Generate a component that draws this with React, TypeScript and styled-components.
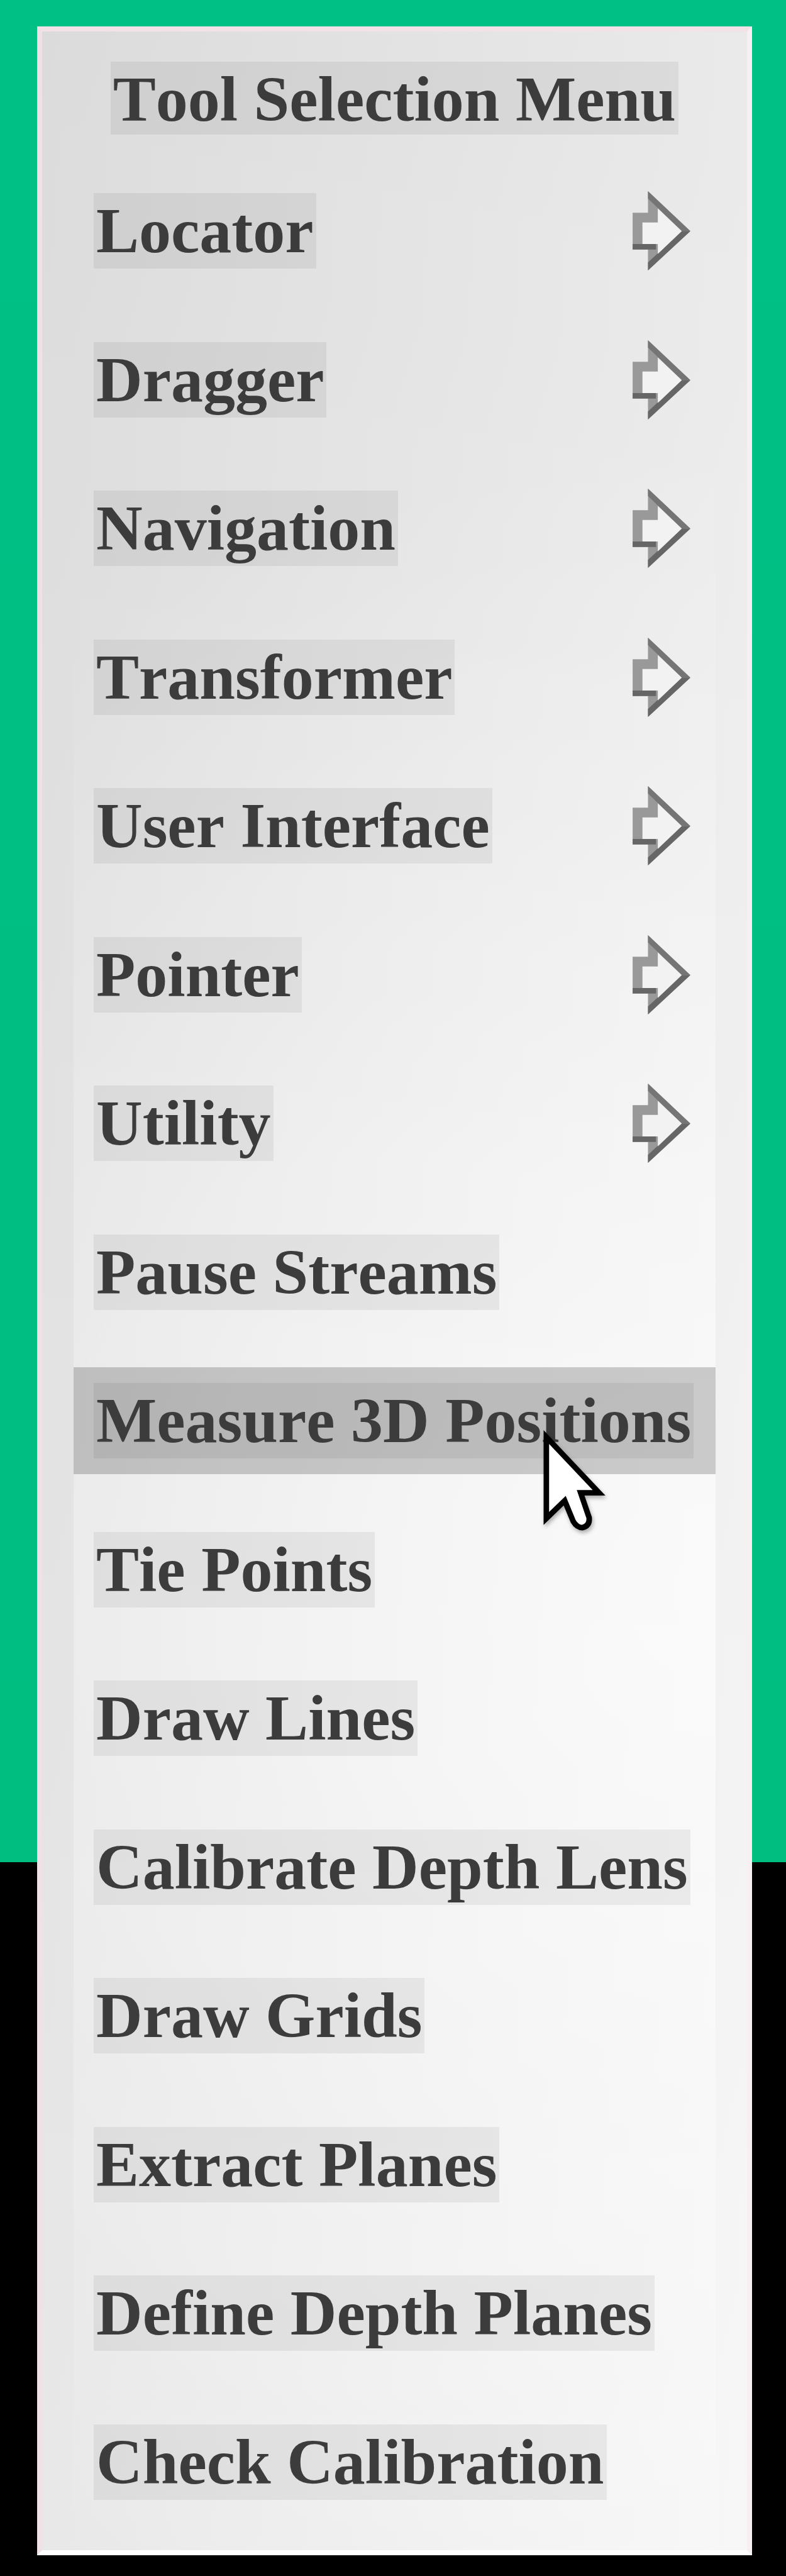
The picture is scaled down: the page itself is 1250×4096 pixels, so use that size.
import React from "react";
import styled, { createGlobalStyle, css } from "styled-components";

const GlobalStyle = createGlobalStyle`
  *, *::before, *::after { box-sizing: border-box; }
  body { margin: 0; background: #000; }
`;

const Desktop = styled.main`
  display: flex;
  min-height: 100vh;
  padding: 42px 56px 33px 59px;
  background: linear-gradient(#00c085 0, #00bd80 72.3%, #000 72.3%);
`;

const Panel = styled.nav`
  display: flex;
  flex: 1;
  flex-direction: column;
  padding: 0 50px 22px 50px;
  border: 8px solid;
  border-color: #f3e3e8 #f8eff2 #fff #efe2e6;
  background:
    radial-gradient(ellipse 180% 46% at 100% 62%, rgba(255, 255, 255, 0.66), rgba(255, 255, 255, 0)) 50% 0 / calc(100% - 100px) 100% no-repeat,
    linear-gradient(rgba(0, 0, 0, 0.045), rgba(0, 0, 0, 0.02) 50%, rgba(0, 0, 0, 0)),
    linear-gradient(93deg, #e5e5e5, #f7f7f7);
  color: #3c3c3c;
  font: bold 102px/120px "Liberation Serif", "Times New Roman", serif;
  font-kerning: none;
  font-variant-ligatures: none;
`;

const Header = styled.header`
  display: flex;
  height: 199px;
  padding-top: 48px;
  justify-content: center;
`;

const Title = styled.h1`
  height: 116px;
  margin: 0;
  padding: 0 4px;
  background: rgba(0, 0, 0, 0.06);
  font: inherit;
  white-space: nowrap;
`;

const Items = styled.ul`
  display: grid;
  flex: 1;
  grid-auto-rows: 1fr;
  margin: 0;
  padding: 0;
  list-style: none;
`;

const Item = styled.li`
  display: flex;
  position: relative;
  align-items: center;
`;

const ItemButton = styled.button<{ $active?: boolean }>`
  display: flex;
  flex: 1;
  align-items: center;
  justify-content: space-between;
  height: 170px;
  padding: 0 40px 0 32px;
  border: 0;
  background: none;
  color: inherit;
  font: inherit;
  font-kerning: inherit;
  font-variant-ligatures: inherit;
  text-align: left;
  white-space: nowrap;
  ${(p) => p.$active && css`background: rgba(0, 0, 0, 0.19); padding-right: 0;`}
`;

const Label = styled.span`
  padding: 0 4px;
  background: rgba(0, 0, 0, 0.06);
`;

const ArrowIcon = styled.svg`
  flex: none;
  width: 92px;
  height: 126px;
`;

const Pointer = styled.svg`
  position: absolute;
  top: 132px;
  left: 747px;
  z-index: 1;
  width: 112px;
  height: 168px;
  overflow: visible;
  filter: drop-shadow(2px 4px 3px rgba(0, 0, 0, 0.3));
  pointer-events: none;
`;

function SubmenuArrow() {
  return (
    <ArrowIcon viewBox="0 0 94 129" aria-hidden="true">
      <path d="M0 35H25V0L94 65L25 129V95H0Z" fill="#999" />
      <path d="M25 0L94 65H80L25 12Z" fill="#757575" />
      <path d="M94 65L25 129V116L80 65ZM0 86H38V95H0Z" fill="#666" />
      <path d="M16 51H41V28L80 65L41 102V86H16Z" fill="#f2f2f2" />
    </ArrowIcon>
  );
}

function MousePointer() {
  return (
    <Pointer viewBox="0 0 115 172" aria-hidden="true">
      <path
        d="M5 12V145L35 116L49 150Q55 160 64 160Q76 157 75 144L61 103H91Z"
        fill="#fff"
        stroke="#000"
        strokeWidth="9"
      />
      <path d="M46 98L61 145" stroke="#fff" strokeWidth="9" />
    </Pointer>
  );
}

interface Tool {
  name: string;
  submenu?: boolean;
  active?: boolean;
}

const tools: Tool[] = [
  { name: "Locator", submenu: true },
  { name: "Dragger", submenu: true },
  { name: "Navigation", submenu: true },
  { name: "Transformer", submenu: true },
  { name: "User Interface", submenu: true },
  { name: "Pointer", submenu: true },
  { name: "Utility", submenu: true },
  { name: "Pause Streams" },
  { name: "Measure 3D Positions", active: true },
  { name: "Tie Points" },
  { name: "Draw Lines" },
  { name: "Calibrate Depth Lens" },
  { name: "Draw Grids" },
  { name: "Extract Planes" },
  { name: "Define Depth Planes" },
  { name: "Check Calibration" },
];

export default function App() {
  return (
    <>
      <GlobalStyle />
      <Desktop>
        <Panel aria-label="Tool Selection Menu">
          <Header>
            <Title>Tool Selection Menu</Title>
          </Header>
          <Items>
            {tools.map((tool) => (
              <Item key={tool.name}>
                <ItemButton type="button" $active={tool.active}>
                  <Label>{tool.name}</Label>
                  {tool.submenu && <SubmenuArrow />}
                </ItemButton>
                {tool.active && <MousePointer />}
              </Item>
            ))}
          </Items>
        </Panel>
      </Desktop>
    </>
  );
}
